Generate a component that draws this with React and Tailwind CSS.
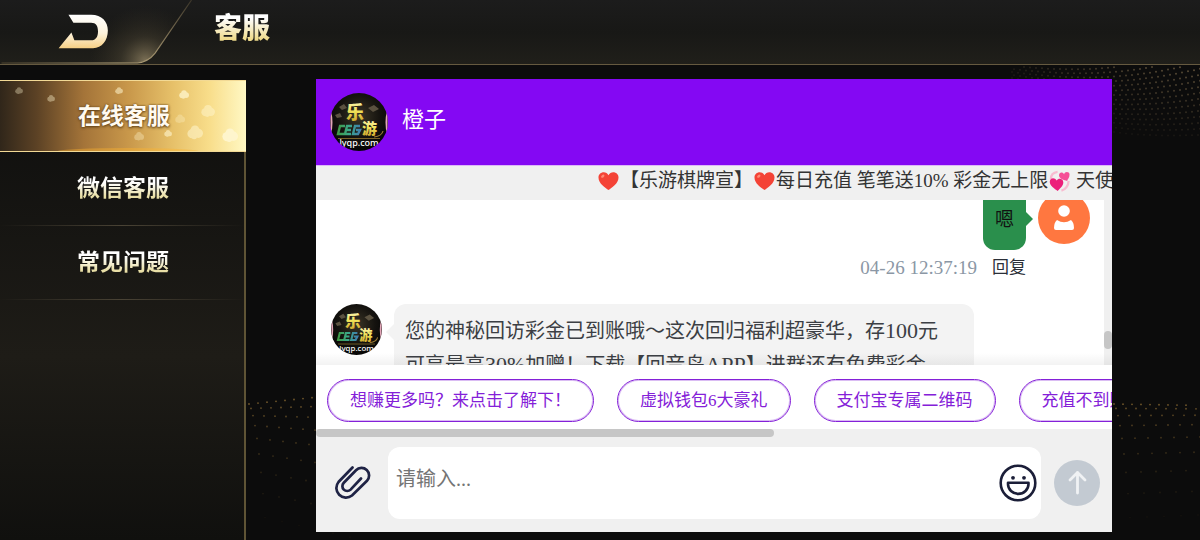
import React, { useState } from 'react';

const menuItems = ['在线客服', '微信客服', '常见问题'];

const quickReplies = ['想赚更多吗？来点击了解下！', '虚拟钱包6大豪礼', '支付宝专属二维码', '充值不到账怎么办'];

// Dotted waves in the page backdrop
const topDots = [];
for (let row = 0; row < 15; row++) {
  for (let col = 0; col < 34; col++) {
    const x = 1012 + col * 6 + (row % 2) * 2;
    const t = (x - 1012) / 188;
    const y = 66 + row * (3 + t * 3) + Math.sin(t * 3) * 6 - t * t * 16;
    if (y < 67 || y > 150) continue;
    topDots.push({ x, y, o: 0.75 * (0.2 + t * 0.8) * (1 - row / 17) });
  }
}

const waveDots = (left, count, rise) => {
  const dots = [];
  for (let row = 0; row < 9; row++) {
    for (let col = 0; col < count; col++) {
      dots.push({
        x: left + col * (9 + row) + row * 2,
        y: 404 + row * row * 1.4 + row * 3 + col * rise * (row - 1.5),
        o: 0.7 - row * 0.08,
      });
    }
  }
  return dots;
};
const bottomDots = [...waveDots(249, 8, 0.6), ...waveDots(1114, 9, -0.1)];

const Backdrop = () => (
  <svg
    className="absolute inset-0 h-full w-full"
    viewBox="0 0 1200 540"
    preserveAspectRatio="none"
    aria-hidden="true"
  >
    {topDots.map((d, i) => (
      <circle key={`t${i}`} cx={d.x} cy={d.y} r="1" fill="#8a7452" opacity={d.o} />
    ))}
    {bottomDots.map((d, i) => (
      <circle key={`b${i}`} cx={d.x} cy={d.y} r="0.9" fill="#9a7638" opacity={d.o} />
    ))}
  </svg>
);

const BackTab = () => (
  <svg className="h-full w-full" viewBox="0 0 196 65" aria-hidden="true">
    <defs>
      <linearGradient id="arrow" x1="0" y1="0" x2="0" y2="1">
        <stop offset="0" stopColor="#ffffff" />
        <stop offset="0.55" stopColor="#fdf3dc" />
        <stop offset="1" stopColor="#f6cf85" />
      </linearGradient>
      <linearGradient id="edge" gradientUnits="userSpaceOnUse" x1="0" y1="64" x2="193" y2="0">
        <stop offset="0" stopColor="#4d4430" />
        <stop offset="0.55" stopColor="#b5a47a" />
        <stop offset="0.75" stopColor="#9a8b68" />
        <stop offset="1" stopColor="#3b3529" />
      </linearGradient>
      <radialGradient id="glow" cx="146" cy="62" r="56" gradientUnits="userSpaceOnUse">
        <stop offset="0" stopColor="#a49470" stopOpacity="0.7" />
        <stop offset="0.45" stopColor="#665b42" stopOpacity="0.3" />
        <stop offset="1" stopColor="#443c2c" stopOpacity="0" />
      </radialGradient>
    </defs>
    <path d="M0 0H193L156 54Q149 63 138 64H0Z" fill="url(#glow)" />
    <path d="M0 64H138Q149 63 156 54L193 0" fill="none" stroke="url(#edge)" strokeWidth="1.2" />
    <path
      d="M68 15H91C102 15 108 22 108 31C108 41 102 49 93 49H58L71 33L74 41H91C96 41 98 37 98 32C98 26 96 23 91 23H73Z"
      fill="url(#arrow)"
    />
  </svg>
);

const sparkles = [
  [19, 10, 4, 0.35],
  [51, 18, 4, 0.4],
  [119, 10, 4, 0.55],
  [184, 14, 5, 0.75],
  [208, 31, 7, 0.5],
  [180, 39, 5, 0.3],
  [139, 57, 5, 0.35],
  [168, 54, 4, 0.6],
  [195, 53, 8, 0.55],
  [230, 56, 8, 0.95],
];

const Sparkles = () => (
  <svg className="absolute inset-0 h-full w-full" viewBox="0 0 246 72" preserveAspectRatio="none" aria-hidden="true">
    {sparkles.map(([x, y, r, o]) => (
      <g key={x} fill="#fff6cf" opacity={o}>
        <circle cx={x - r * 0.35} cy={y + r * 0.15} r={r * 0.6} />
        <circle cx={x + r * 0.4} cy={y + r * 0.1} r={r * 0.6} />
        <circle cx={x} cy={y - r * 0.35} r={r * 0.55} />
        <circle cx={x - r * 0.1} cy={y + r * 0.5} r={r * 0.35} />
      </g>
    ))}
    <ellipse cx="128" cy="72" rx="70" ry="3" fill="#ffb52e" opacity="0.4" />
  </svg>
);

const Avatar = ({ id, className }) => (
  <svg className={className} viewBox="0 0 58 58" role="img" aria-label="乐游">
    <defs>
      <radialGradient id={`${id}-bg`} cx="0.5" cy="0.4" r="0.6">
        <stop offset="0" stopColor="#3a3526" />
        <stop offset="0.6" stopColor="#15130f" />
        <stop offset="1" stopColor="#050505" />
      </radialGradient>
      <linearGradient id={`${id}-gold`} x1="0" y1="0" x2="0" y2="1">
        <stop offset="0" stopColor="#fffbd0" />
        <stop offset="0.5" stopColor="#f0e35a" />
        <stop offset="1" stopColor="#c79a22" />
      </linearGradient>
      <linearGradient id={`${id}-green`} x1="0" y1="0" x2="1" y2="0">
        <stop offset="0" stopColor="#3f9a45" />
        <stop offset="0.5" stopColor="#3aa888" />
        <stop offset="1" stopColor="#3f7fae" />
      </linearGradient>
      <clipPath id={`${id}-clip`}>
        <circle cx="29" cy="29" r="29" />
      </clipPath>
    </defs>
    <g clipPath={`url(#${id}-clip)`}>
      <rect width="58" height="58" fill={`url(#${id}-bg)`} />
      <path d="M0 18Q3 29 0 42M58 18Q55 29 58 42" stroke="#e3a6b8" strokeWidth="2" fill="none" />
      <path d="M9 14l5-3 3 4-5 2zM38 15l6-3 5 4-6 3zM5 22l5-2 2 4-5 1z" fill="#5b5240" />
      <path d="M44 44q8-1 9-6" stroke="#9b7b33" strokeWidth="1.2" fill="none" />
      <rect x="8" y="45" width="42" height="1" fill="#7a6228" />
      <g fill="none" stroke={`url(#${id}-green)`} strokeWidth="2.4">
        <path d="M15 33H10L8 41H14M22 33H17L15 41H21M16 37H21M30 33H25L23 41H28L30 37H26" />
      </g>
      <text x="16" y="26" fontSize="18" fontWeight="900" fontFamily="'Noto Sans CJK SC', sans-serif" fill={`url(#${id}-gold)`}>
        乐
      </text>
      <text x="32" y="41" fontSize="15" fontWeight="900" fontFamily="'Noto Sans CJK SC', sans-serif" fill={`url(#${id}-gold)`}>
        游
      </text>
      <text x="29" y="53" fontSize="9" fontWeight="500" textAnchor="middle" fontFamily="'Noto Sans', sans-serif" fill="#ffffff">
        lyqp.com
      </text>
    </g>
  </svg>
);

const Heart = () => (
  <svg className="mx-px h-5 w-[21px] shrink-0" viewBox="0 0 22 20" role="img" aria-label="❤">
    <path
      d="M11 19.5C8 17 .5 13 .5 6.3C.5 3 3 .8 6 .8C8.2 .8 10 2 11 4C12 2 13.8 .8 16 .8C19 .8 21.5 3 21.5 6.3C21.5 13 14 17 11 19.5Z"
      fill="#f44336"
    />
    <ellipse cx="5" cy="5" rx="2" ry="1.3" fill="#ff8a75" transform="rotate(-40 5 5)" />
  </svg>
);

const TwoHearts = () => (
  <svg className="mx-px h-[22px] w-[21px] shrink-0" viewBox="0 0 22 22" role="img" aria-label="💞">
    <path d="M2 9C2 4 5 2 9 1.5M20.5 11C20.500 16 17 20 13 21" stroke="#f8bbd0" strokeWidth="2.4" fill="none" />
    <path d="M9 21.5C6 19 .5 16 .8 11.5C1.3 7.500 6 7 8 10.500C10 7.500 15 8.500 15 12.500C15 16.500 11 19 9 21.5Z" fill="#ec1f7a" />
    <path d="M19 11C16 10 10.500 9 10.500 5C10.500 1.500 14.500 1 15.800 4C16.500 .5 21.300 .8 21.500 4C21.700 7.500 19.500 9 19 11Z" fill="#f54f96" />
  </svg>
);

const ClipIcon = () => (
  <svg className="h-[35px] w-[37px]" viewBox="0 0 37 35" fill="none" stroke="#1f2345" strokeWidth="2.7" strokeLinecap="round" aria-hidden="true">
    <path d="M18.5 1.5L4.5 16A9.6 9.6 0 0 0 18 29.5L33 14.8A7.3 7.3 0 0 0 22 4.3L9.8 16.8A4.8 4.8 0 0 0 16.6 23.6L27 12.5" />
  </svg>
);

const SmileIcon = () => (
  <svg className="h-[38px] w-[38px]" viewBox="0 0 38 38" fill="none" stroke="#1b1e38" strokeWidth="2.6" strokeLinejoin="round" aria-hidden="true">
    <circle cx="19" cy="19" r="17.3" />
    <path d="M9 18.8H29.5V20A10.2 9.8 0 0 1 9 20Z" />
    <circle cx="14" cy="13.8" r="1.9" fill="#1b1e38" stroke="none" />
    <circle cx="25" cy="13.8" r="1.9" fill="#1b1e38" stroke="none" />
  </svg>
);

const Header = () => (
  <header className="relative flex h-[65px] shrink-0 border-b border-[#665a40] bg-linear-to-b from-[#1c1c1c] via-[#181816] to-[#201f1a]">
    <button type="button" aria-label="返回" className="w-[196px] shrink-0">
      <BackTab />
    </button>
    <h1 className="ml-[18px] h-[52px] bg-linear-to-b from-white from-35% to-[#efdb8c] to-75% bg-clip-text text-[28px] leading-[52px] font-black text-transparent">
      客服
    </h1>
  </header>
);

const Sidebar = ({ active, onSelect }) => (
  <nav className="mt-[15px] w-[246px] shrink-0 border-r-2 border-[#5f5435] bg-linear-to-b from-[#0e0e0d] via-[#1e1c17] via-60% to-[#10100e]">
    {menuItems.map((item, i) =>
      i === active ? (
        <button
          key={item}
          type="button"
          onClick={() => onSelect(i)}
          className="relative -mr-[2px] block h-[72px] w-[246px] border-y border-[#f2d995] bg-[linear-gradient(90deg,#30261a_0%,#5c4225_15%,#a47439_34%,#c8974a_52%,#e6c069_70%,#f8dd8a_85%,#fff8c4_100%)] pb-1 pl-[2px] text-[23px] font-bold text-[#fffaf0]"
        >
          <Sparkles />
          <span className="relative [text-shadow:0_1px_3px_#5a3c14,0_0_2px_#6d4a1c]">{item}</span>
        </button>
      ) : (
        <button
          key={item}
          type="button"
          onClick={() => onSelect(i)}
          className="block h-[74px] w-full border-b pb-1 pl-[2px] text-[23px] font-bold [border-image:linear-gradient(90deg,transparent,#4a4335,transparent)_1]"
        >
          <span className="bg-linear-to-b from-white from-40% to-[#e9dfa6] to-80% bg-clip-text text-transparent">{item}</span>
        </button>
      )
    )}
  </nav>
);

const Notice = () => (
  <div className="flex h-[35px] shrink-0 items-center overflow-hidden border-t border-[#dcb8f7] bg-[#f0f0f0] pb-1 pl-[281px] text-[19px] leading-7 whitespace-pre text-[#333]">
    <Heart />
    <span>【乐游棋牌宣】</span>
    <Heart />
    <span>每日充值 笔笔送10% 彩金无上限</span>
    <TwoHearts />
    <span> 天使降临</span>
  </div>
);

const Messages = () => (
  <div className="relative flex min-h-0 flex-1 overflow-hidden bg-white">
    <div className="-mt-2 min-w-0 flex-1 pr-[14px] pl-[15px]">
      <div className="flex items-start justify-end">
        <div className="h-[58px] rounded-b-xl bg-[#2a8f4c] px-3 text-[19px] leading-[56px] text-[#111]">嗯</div>
        <svg className="mt-5 mr-[5px] h-[14px] w-[7px]" viewBox="0 0 7 14" aria-hidden="true">
          <path d="M0 0L7 7L0 14Z" fill="#2a8f4c" />
        </svg>
        <svg className="h-[52px] w-[52px]" viewBox="0 0 52 52" role="img" aria-label="用户">
          <circle cx="26" cy="26" r="26" fill="#ff7740" />
          <circle cx="26" cy="19" r="5.800" fill="#fff" />
          <path d="M19 28Q26 32.500 33 28Q36 30.500 36 36Q36 38 34 38H18Q16 38 16 36Q16 30.500 19 28Z" fill="#fff" />
        </svg>
      </div>
      <div className="mt-[6px] flex h-6 items-center justify-end gap-[15px] pr-16">
        <time className="text-[19px] text-[#8b97a5]">04-26 12:37:19</time>
        <button type="button" className="text-[17px] text-[#2b2f38]">回复</button>
      </div>
      <div className="mt-6 flex items-start">
        <Avatar id="msg" className="h-[51px] w-[51px] shrink-0" />
        <svg className="mt-5 ml-1 h-4 w-2 shrink-0" viewBox="0 0 8 16" aria-hidden="true">
          <path d="M8 0L0 8L8 16Z" fill="#f3f3f3" />
        </svg>
        <p className="w-[580px] rounded-xl bg-[#f3f3f3] px-[11px] py-[10px] text-[20px] leading-[34px] text-[#3c3f44]">
          您的神秘回访彩金已到账哦～这次回归福利超豪华，存<span className="text-[22px]">100</span>元
          <br />
          可享最高<span className="text-[22px]">30%</span>加赠！下载【回音鸟<span className="text-[22px]">APP</span>】进群还有免费彩金
        </p>
      </div>
    </div>
    <div className="w-2 shrink-0 bg-[#f0f0f0] pt-[131px]">
      <div className="h-[18px] rounded-full bg-[#c6c6c6]" />
    </div>
    <div className="absolute inset-x-0 bottom-0 h-3 bg-linear-to-b from-transparent to-black/5" />
  </div>
);

const QuickReplies = ({ onPick }) => (
  <div className="shrink-0">
    <div className="flex gap-[23px] overflow-hidden bg-white pt-[14px] pb-[7px] pl-[11px]">
      {quickReplies.map((text) => (
        <button
          key={text}
          type="button"
          onClick={() => onPick(text)}
          className="h-[43px] shrink-0 rounded-full border border-[#8420d8] px-[22px] text-[17px] whitespace-nowrap text-[#8420d8] ring-1 ring-[#8420d8]/30 ring-inset"
        >
          {text}
        </button>
      ))}
    </div>
    <div className="h-2 bg-[#f0f0f0]">
      <div className="h-full w-[458px] rounded-full bg-[#c6c6c6]" />
    </div>
  </div>
);

const Composer = ({ value, onChange }) => (
  <form onSubmit={(e) => e.preventDefault()} className="flex shrink-0 items-center bg-[#f0f0f0] pt-[10px] pr-3 pb-[13px] pl-[18px]">
    <button type="button" aria-label="附件" className="mr-[17px]">
      <ClipIcon />
    </button>
    <div className="mr-[13px] flex h-[72px] min-w-0 flex-1 items-center rounded-xl bg-white pr-1 pl-2">
      <textarea
        aria-label="消息"
        placeholder="请输入..."
        value={value}
        onChange={(e) => onChange(e.target.value)}
        className="h-full min-w-0 flex-1 resize-none overflow-hidden pt-4 text-[20px] leading-8 text-[#333] outline-none placeholder:text-[#757575]"
      />
      <button type="button" aria-label="表情">
        <SmileIcon />
      </button>
    </div>
    <button type="submit" aria-label="发送" className="h-[46px] w-[46px] shrink-0 rounded-full bg-[#c3cad2]">
      <svg className="h-full w-full" viewBox="0 0 46 46" fill="none" stroke="#f0f2f4" strokeWidth="2.8" strokeLinecap="round" strokeLinejoin="round" aria-hidden="true">
        <path d="M23.5 33V12.5M16 20L23.5 12.5L31 20" />
      </svg>
    </button>
  </form>
);

export default function App() {
  const [active, setActive] = useState(0);
  const [draft, setDraft] = useState('');

  return (
    <div className="relative flex h-screen flex-col overflow-hidden bg-[#0c0c0c] font-['Noto_Sans_CJK_SC',sans-serif]">
      <Backdrop />
      <Header />
      <div className="relative flex min-h-0 flex-1">
        <Sidebar active={active} onSelect={setActive} />
        <main className="mt-[14px] mr-[88px] mb-2 ml-[70px] flex min-w-0 flex-1 flex-col font-['Liberation_Serif','Noto_Sans_CJK_SC',serif]">
          <div className="flex h-[86px] shrink-0 items-center bg-[#8408f3] pb-1 pl-[14px]">
            <Avatar id="head" className="mt-1 h-[58px] w-[58px] shrink-0" />
            <h2 className="ml-[14px] text-[22px] leading-8 text-white">橙子</h2>
          </div>
          <Notice />
          <Messages />
          <QuickReplies onPick={setDraft} />
          <Composer value={draft} onChange={setDraft} />
        </main>
      </div>
    </div>
  );
}
